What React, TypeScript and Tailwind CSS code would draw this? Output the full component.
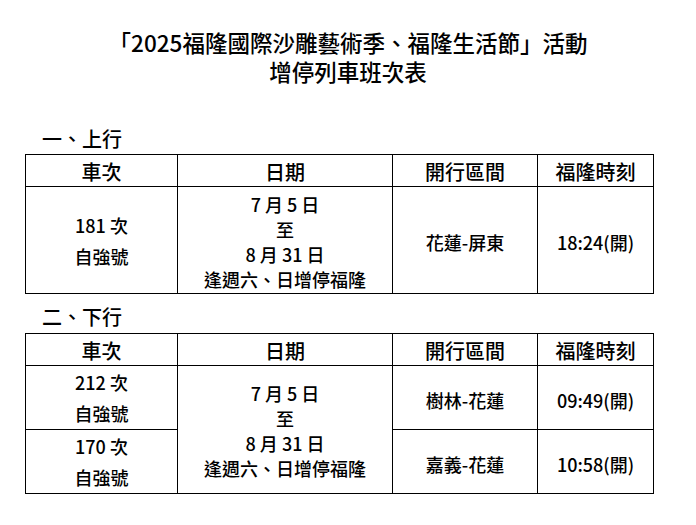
import React from "react";

const font = { fontFamily: '"Noto Sans CJK TC", "Noto Sans", sans-serif' };

const cell = "border border-black text-center align-middle p-0";

const Header = () => (
  <tr className="h-[32px]">
    <th className={`${cell} font-medium text-[20px] leading-[24px] pt-[3px]`}>車次</th>
    <th className={`${cell} font-medium text-[20px] leading-[24px] pt-[3px]`}>日期</th>
    <th className={`${cell} font-medium text-[20px] leading-[24px] pt-[3px]`}>開行區間</th>
    <th className={`${cell} font-medium text-[20px] leading-[24px] pt-[3px]`}>福隆時刻</th>
  </tr>
);

const Cols = () => (
  <colgroup>
    <col className="w-[152px]" />
    <col className="w-[215px]" />
    <col className="w-[145px]" />
    <col className="w-[116px]" />
  </colgroup>
);

const DateCell = ({ rowSpan }: { rowSpan?: number }) => (
  <td rowSpan={rowSpan} className={`${cell} text-[18px] leading-[25px] pt-[3px]`}>
    <div>7 月 5 日</div>
    <div>至</div>
    <div>8 月 31 日</div>
    <div>逢週六、日增停福隆</div>
  </td>
);

const Train = ({ no }: { no: string }) => (
  <td className={`${cell} text-[18px] leading-[31px] pt-[1px]`}>
    <div>{no} 次</div>
    <div>自強號</div>
  </td>
);

const Plain = ({ children }: { children: React.ReactNode }) => (
  <td className={`${cell} text-[18px] leading-[25px] pt-[5px]`}>{children}</td>
);

export default function App() {
  return (
    <div className="w-[696px] h-[525px] bg-white text-black font-medium overflow-hidden" style={font}>
      <div className="pt-[28px] text-center text-[22.5px] leading-[29px]">
        <div>「2025福隆國際沙雕藝術季、福隆生活節」活動</div>
        <div>增停列車班次表</div>
      </div>

      <div className="mt-[41px] pl-[42px] text-[20px] leading-[24px]">一、上行</div>
      <table className="mt-[3px] ml-[25px] w-[628px] border-collapse table-fixed">
        <Cols />
        <tbody>
          <Header />
          <tr className="h-[107px]">
            <Train no="181" />
            <DateCell />
            <Plain>花蓮-屏東</Plain>
            <Plain>18:24(開)</Plain>
          </tr>
        </tbody>
      </table>

      <div className="mt-[11px] pl-[42px] text-[20px] leading-[24px]">二、下行</div>
      <table className="mt-[4px] ml-[25px] w-[628px] border-collapse table-fixed">
        <Cols />
        <tbody>
          <Header />
          <tr className="h-[63px]">
            <Train no="212" />
            <DateCell rowSpan={2} />
            <Plain>樹林-花蓮</Plain>
            <Plain>09:49(開)</Plain>
          </tr>
          <tr className="h-[63px]">
            <Train no="170" />
            <Plain>嘉義-花蓮</Plain>
            <Plain>10:58(開)</Plain>
          </tr>
        </tbody>
      </table>
    </div>
  );
}
